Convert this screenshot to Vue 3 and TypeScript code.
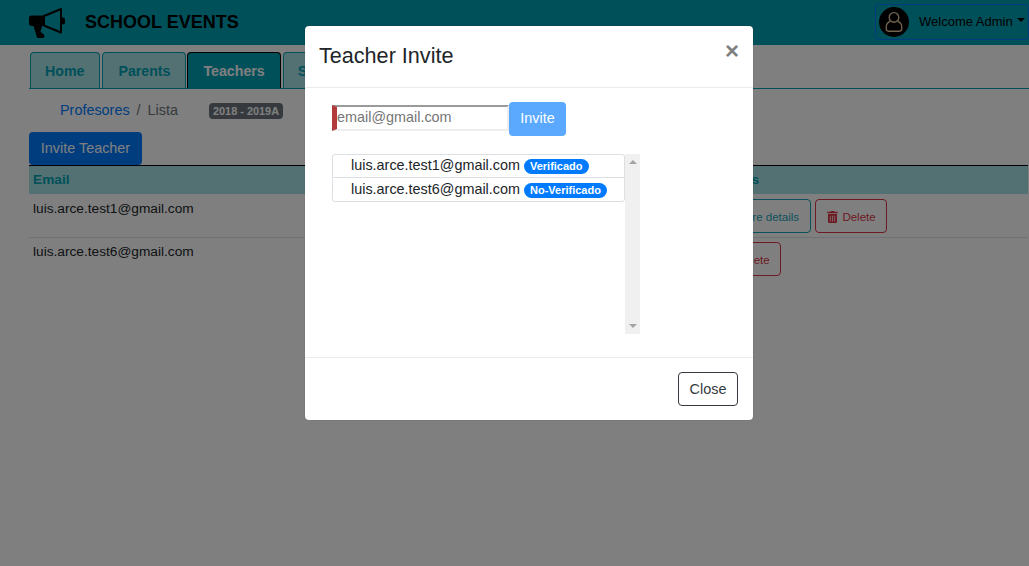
<script setup lang="ts">
const tabs: { label: string; active?: boolean }[] = [
  { label: 'Home' },
  { label: 'Parents' },
  { label: 'Teachers', active: true },
  { label: 'Students' },
]
const invites = [
  { email: 'luis.arce.test1@gmail.com', status: 'Verificado' },
  { email: 'luis.arce.test6@gmail.com', status: 'No-Verificado' },
]
</script>

<template>
  <div class="page">
    <header class="topbar">
      <div class="brand">
        <svg class="horn" viewBox="0 0 38 33" width="38" height="33">
          <rect x="32.500" y="10.500" width="4.500" height="7" rx="2" fill="#000" />
          <path d="M16 9 33 2v23.500L16 18.500z" fill="#00a0b4" stroke="#000" stroke-width="2" stroke-linejoin="round" />
          <path d="M3.500 8.500H17v10.500h-3L12.500 25l3.300 2.500c1 1 .8 3.500-1 3.500h-4.300c-1 0-1.500-.5-1.800-1.500L5.500 19H3.500C2 19 1 18 1 16.500v-5.500c0-1.500 1-2.500 2.500-2.500z" fill="#000" />
        </svg>
        <span class="brand-name">SCHOOL EVENTS</span>
      </div>
      <div class="account">
        <span class="avatar">
          <svg viewBox="0 0 20 20" width="24" height="24" fill="none" stroke="#e8c9a0" stroke-width="1.100">
            <circle cx="10" cy="6.200" r="4" />
            <path d="M6.800 9.500C4.500 10.500 3.500 12 3.500 14.500v1.200c0 1.300.8 2 2 2h9c1.200 0 2-.7 2-2v-1.200c0-2.500-1-4-3.300-5" />
          </svg>
        </span>
        <span class="welcome">Welcome Admin</span>
        <span class="caret"></span>
      </div>
    </header>

    <nav class="tabs">
      <a v-for="t in tabs" :key="t.label" class="tab" :class="{ active: t.active }">{{ t.label }}</a>
    </nav>

    <div class="crumbs">
      <a class="crumb-link">Profesores</a>
      <span class="sep">/</span>
      <span class="crumb-now">Lista</span>
      <span class="period">2018 - 2019A</span>
    </div>

    <button class="invite-teacher">Invite Teacher</button>

    <section class="table">
      <div class="row head">
        <div class="cell email">Email</div>
        <div class="cell actions">Actions</div>
      </div>
      <div class="row first">
        <div class="cell email">luis.arce.test1@gmail.com</div>
        <div class="cell actions">
          <button class="act details">More details</button>
          <button class="act del">
            <svg viewBox="0 0 448 512" width="11" height="12"><path fill="currentColor" d="M32 464a48 48 0 0 0 48 48h288a48 48 0 0 0 48-48V128H32zm272-256a16 16 0 0 1 32 0v224a16 16 0 0 1-32 0zm-96 0a16 16 0 0 1 32 0v224a16 16 0 0 1-32 0zm-96 0a16 16 0 0 1 32 0v224a16 16 0 0 1-32 0zM432 32H312l-9.400-18.700A24 24 0 0 0 281.100 0H166.800a23.700 23.700 0 0 0-21.400 13.300L136 32H16A16 16 0 0 0 0 48v32a16 16 0 0 0 16 16h416a16 16 0 0 0 16-16V48a16 16 0 0 0-16-16z" /></svg>
            Delete
          </button>
        </div>
      </div>
      <div class="row second">
        <div class="cell email">luis.arce.test6@gmail.com</div>
        <div class="cell actions">
          <button class="act del">
            <svg viewBox="0 0 448 512" width="11" height="12"><path fill="currentColor" d="M32 464a48 48 0 0 0 48 48h288a48 48 0 0 0 48-48V128H32zm272-256a16 16 0 0 1 32 0v224a16 16 0 0 1-32 0zm-96 0a16 16 0 0 1 32 0v224a16 16 0 0 1-32 0zm-96 0a16 16 0 0 1 32 0v224a16 16 0 0 1-32 0zM432 32H312l-9.400-18.700A24 24 0 0 0 281.100 0H166.800a23.700 23.700 0 0 0-21.400 13.300L136 32H16A16 16 0 0 0 0 48v32a16 16 0 0 0 16 16h416a16 16 0 0 0 16-16V48a16 16 0 0 0-16-16z" /></svg>
            Delete
          </button>
        </div>
      </div>
    </section>

    <div class="backdrop"></div>

    <div class="modal">
      <div class="modal-head">
        <h5 class="modal-title">Teacher Invite</h5>
        <span class="close-x">×</span>
      </div>
      <div class="modal-body">
        <div class="invite-form">
          <input class="email-input" placeholder="email@gmail.com" />
          <button class="invite-btn">Invite</button>
        </div>
        <div class="list-wrap">
          <ul class="list">
            <li v-for="i in invites" :key="i.email" class="item">
              <span class="item-mail">{{ i.email }}</span>
              <span class="pill">{{ i.status }}</span>
            </li>
          </ul>
          <div class="scrollbar">
            <span class="arrow up"></span>
            <span class="arrow down"></span>
          </div>
        </div>
      </div>
      <div class="modal-foot">
        <button class="close-btn">Close</button>
      </div>
    </div>
  </div>
</template>

<style>
html, body { margin: 0; background: #fff; }
</style>

<style scoped>
.page {
  position: relative;
  width: 1029px;
  height: 566px;
  overflow: hidden;
  background: #fff;
  font-family: "Liberation Sans", Arial, sans-serif;
  color: #212529;
}
.topbar {
  height: 45px;
  box-sizing: border-box;
  background: #00a0b4;
  display: flex;
  align-items: center;
  justify-content: space-between;
  padding-left: 28px;
}
.brand { display: flex; align-items: center; }
.horn { display: block; margin-top: 1px; }
.brand-name {
  margin-left: 19px;
  font-size: 18px;
  font-weight: 700;
  color: #000;
}
.account {
  display: flex;
  align-items: center;
  height: 36px;
  width: 154px;
  box-sizing: border-box;
  margin-bottom: 2px;
  padding-left: 3px;
  border: 1px solid #007bff;
  border-radius: 4px;
  font-size: 13px;
  color: #000;
  white-space: nowrap;
}
.avatar {
  width: 30px;
  height: 30px;
  border-radius: 50%;
  background: #000;
  display: flex;
  align-items: center;
  justify-content: center;
}
.welcome { margin-left: 10px; }
.caret {
  margin-left: 4px;
  margin-top: -3px;
  border-top: 4px solid #000;
  border-left: 4px solid transparent;
  border-right: 4px solid transparent;
}
.tabs {
  display: flex;
  gap: 2px;
  margin: 7px 0 0 29px;
  padding-left: 1px;
  height: 36px;
  border-bottom: 1px solid #00a0b4;
}
.tab {
  box-sizing: border-box;
  height: 36px;
  padding: 0 15px;
  display: flex;
  align-items: center;
  background: #a6e3e6;
  border: 1px solid #00a0b4;
  border-bottom: 0;
  border-radius: 4px 4px 0 0;
  font-size: 14.200px;
  font-weight: 700;
  color: #00a0b4;
}
.tab:first-child, .tab:last-child { padding-left: 14px; }
.tab.active {
  margin-left: -1px;
  background: #00a0b4;
  border-color: #000;
  color: #fff;
}
.crumbs {
  display: flex;
  align-items: center;
  height: 22px;
  margin: 10px 0 0 60px;
  font-size: 14.400px;
}
.crumb-link { color: #007bff; }
.sep { margin: 0 7px; color: #6c757d; }
.crumb-now { color: #6c757d; }
.period {
  margin: 2px 0 0 31px;
  padding: 2px 4px;
  background: #6c757d;
  color: #fff;
  border-radius: 4px;
  font-size: 10.900px;
  font-weight: 700;
}
.invite-teacher {
  display: block;
  margin: 11px 0 0 29px;
  width: 113px;
  height: 33px;
  border: 0;
  border-radius: 4px;
  background: #007bff;
  color: #fff;
  font: 14.400px "Liberation Sans", Arial, sans-serif;
  padding: 0 0 1px;
}
.table { margin: 0 1px 0 29px; font-size: 13.700px; }
.row {
  display: flex;
  border-top: 1px solid #dee2e6;
}
.head {
  padding-bottom: 1px;
  box-sizing: border-box;
  height: 29px;
  border-top: 1px solid #000;
  background: #a6e3e6;
  color: #00a0b4;
  font-weight: 700;
  align-items: center;
}
.first { border-top: 0; height: 43px; }
.cell { padding: 0 4px; }
.email { width: 676px; box-sizing: border-box; }
.first .email { padding-top: 7px; }
.second .email { padding-top: 6px; }
.actions { display: flex; gap: 4px; padding-top: 4px; }
.first .actions { padding-top: 5px; }
.head .actions { padding-top: 0; }
.act {
  height: 34px;
  box-sizing: border-box;
  background: transparent;
  border-radius: 4px;
  font: 11.500px "Liberation Sans", Arial, sans-serif;
  padding: 1px 0 0 1px;
  display: flex;
  align-items: center;
  justify-content: center;
  gap: 4px;
}
.details {
  width: 102px;
  justify-content: flex-end;
  padding-right: 11px;
  border: 1px solid #17a2b8;
  color: #17a2b8;
}
.del { width: 72px; border: 1px solid #dc3545; color: #dc3545; }
.backdrop {
  position: absolute;
  inset: 0;
  background: rgba(0, 0, 0, 0.5);
}
.modal {
  position: absolute;
  left: 305px;
  top: 26px;
  width: 448px;
  height: 394px;
  display: flex;
  flex-direction: column;
  background: #fff;
  border-radius: 4px;
  box-shadow: 0 0 1px rgba(0, 0, 0, 0.4);
}
.modal-head {
  height: 62px;
  box-sizing: border-box;
  display: flex;
  align-items: center;
  justify-content: space-between;
  padding: 0 14px;
  border-bottom: 1px solid #e9ecef;
}
.modal-title {
  margin: -2px 0 0;
  font-size: 21.600px;
  font-weight: 400;
  color: #212529;
}
.close-x {
  font-size: 24px;
  font-weight: 700;
  color: #7f7f7f;
  line-height: 1;
  margin-top: -12px;
}
.modal-body {
  flex: 1;
  padding: 14px 0 0 27px;
}
.invite-form { display: flex; align-items: flex-start; }
.email-input {
  box-sizing: border-box;
  width: 177px;
  height: 26px;
  margin-top: 3px;
  padding: 0 0 2px;
  border-style: solid;
  border-width: 2px 2px 2px 5px;
  border-color: #9a9a9a #eeeeee #eeeeee #b33a3a;
  outline: 0;
  font: 14.400px "Liberation Sans", Arial, sans-serif;
  background: #fff;
}
.email-input::placeholder { color: #757575; opacity: 1; }
.invite-btn {
  width: 57px;
  height: 34px;
  border: 0;
  border-radius: 4px;
  background: #5aa9ff;
  color: #fff;
  padding: 0 0 2px;
  font: 14.400px "Liberation Sans", Arial, sans-serif;
}
.list-wrap {
  display: flex;
  align-items: flex-start;
  margin-top: 18px;
  width: 308px;
  height: 180px;
}
.list {
  list-style: none;
  margin: 0;
  padding: 0;
  width: 293px;
  box-sizing: border-box;
  border: 1px solid #dcdfe3;
  border-radius: 3px;
  font-size: 14.400px;
}
.item {
  height: 22px;
  box-sizing: border-box;
  display: flex;
  align-items: center;
  padding-left: 18px;
  color: #212529;
}
.item + .item { border-top: 1px solid #dcdfe3; height: 24px; padding-top: 1px; }
.item-mail { margin-bottom: 3px; }
.pill {
  margin-left: 4px;
  padding: 2px 6px;
  background: #007bff;
  color: #fff;
  border-radius: 8px;
  font-size: 11px;
  font-weight: 700;
  line-height: 11px;
}
.scrollbar {
  width: 15px;
  height: 180px;
  background: #f0f0f0;
  position: relative;
}
.arrow {
  position: absolute;
  left: 3.500px;
  border-left: 4px solid transparent;
  border-right: 4px solid transparent;
}
.arrow.up { top: 6px; border-bottom: 4px solid #a3a3a3; }
.arrow.down { bottom: 6px; border-top: 4px solid #a3a3a3; }
.modal-foot {
  height: 63px;
  box-sizing: border-box;
  display: flex;
  align-items: center;
  justify-content: flex-end;
  padding: 0 15px;
  border-top: 1px solid #e9ecef;
}
.close-btn {
  width: 60px;
  height: 34px;
  background: #fff;
  border: 1px solid #343a40;
  border-radius: 4px;
  color: #343a40;
  padding: 0;
  font: 14.400px "Liberation Sans", Arial, sans-serif;
}
</style>
